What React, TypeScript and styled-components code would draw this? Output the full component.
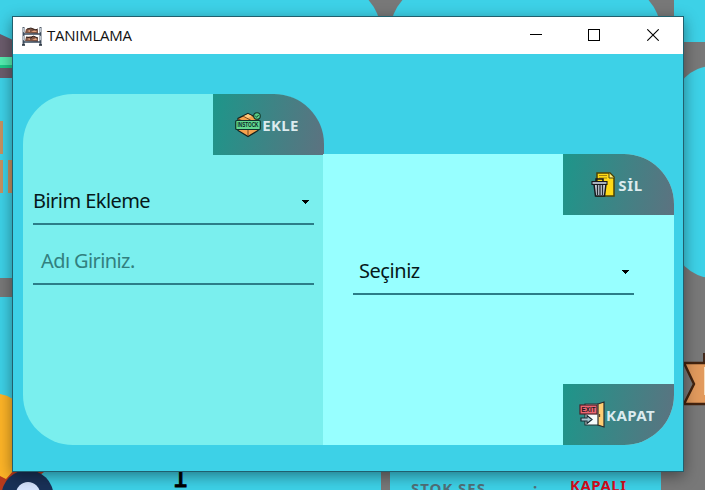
import React from "react";
import styled, { createGlobalStyle } from "styled-components";

const GlobalStyle = createGlobalStyle`
  * { box-sizing: border-box; }
  body { margin: 0; overflow: hidden; }
`;

const Desktop = styled.div`
  position: relative;
  width: 705px;
  height: 490px;
  padding: 16px 0 0 12px;
  overflow: hidden;
  background: #787878;
  font-family: "Noto Sans", sans-serif;
`;

const BackCard = styled.div<{ $x: number; $y: number; $w: number; $h: number; $r?: string }>`
  position: absolute;
  left: ${(p) => p.$x}px;
  top: ${(p) => p.$y}px;
  width: ${(p) => p.$w}px;
  height: ${(p) => p.$h}px;
  border-radius: ${(p) => p.$r ?? "0"};
  background: #3dd1e7;
`;

const BackArt = styled.svg`
  position: absolute;
  left: 0;
  top: 0;
`;

const BackLabel = styled.span<{ $x: number; $y: number; $color: string; $size: number; $spacing?: number }>`
  position: absolute;
  left: ${(p) => p.$x}px;
  top: ${(p) => p.$y}px;
  font-size: ${(p) => p.$size}px;
  line-height: 20px;
  font-weight: 700;
  letter-spacing: ${(p) => p.$spacing ?? 0}px;
  color: ${(p) => p.$color};
  white-space: pre;
`;

const BackNumber = styled(BackLabel)`
  font-family: "DejaVu Sans", sans-serif;
  font-weight: 400;
  -webkit-text-stroke: 0.9px #000;
`;

const Window = styled.main`
  position: relative;
  display: flex;
  flex-direction: column;
  width: 672px;
  height: 456px;
  border: 1px solid #20606e;
  background: #3dd1e7;
  box-shadow: 0 4px 14px rgba(0, 0, 0, 0.42);
`;

const TitleBar = styled.header`
  display: flex;
  align-items: center;
  flex: 0 0 37px;
  padding: 0 1px 0 9px;
  background: #fff;
`;

const Title = styled.h1`
  flex: 1;
  margin: -2px 0 0 5px;
  font: 400 15px/20px "Open Sans", sans-serif;
  letter-spacing: -0.25px;
  color: #111;
`;

const WindowButton = styled.button`
  display: grid;
  place-items: center;
  width: 58.5px;
  height: 37px;
  padding: 0 0 2px;
  border: 0;
  background: none;
`;

const Body = styled.div`
  display: grid;
  grid-template-columns: 300px 351px;
  grid-template-rows: 351px;
  padding: 40px 0 0 10px;
`;

const AddPanel = styled.section`
  display: flex;
  flex-direction: column;
  border-radius: 50px 50px 0 50px;
  background: #7aefee;
`;

const RemovePanel = styled.section`
  display: flex;
  flex-direction: column;
  height: 291px;
  margin-top: 60px;
  border-radius: 0 50px 50px 0;
  background: #97ffff;
`;

const ActionButton = styled.button<{ $corner: "top" | "bottom"; $shift?: number }>`
  display: flex;
  align-items: center;
  justify-content: center;
  align-self: flex-end;
  flex: 0 0 61px;
  width: 111px;
  margin-right: ${(p) => p.$shift ?? 0}px;
  margin-top: ${(p) => (p.$corner === "bottom" ? "auto" : "0")};
  padding: 0 3px 0 0;
  border: 0;
  border-radius: ${(p) => (p.$corner === "top" ? "0 50px 0 0" : "0 0 50px 0")};
  background: linear-gradient(100deg, #1d968a 0%, #5d7280 100%);
  color: #dcebee;
  font: 700 15px/20px "Noto Sans", sans-serif;
`;

const ButtonText = styled.span<{ $spacing: number }>`
  margin-left: 1px;
  letter-spacing: ${(p) => p.$spacing}px;
`;

const Field = styled.div<{ $top: number; $left: number; $indent: number }>`
  display: flex;
  align-items: center;
  justify-content: space-between;
  width: 281px;
  height: 46px;
  margin: ${(p) => p.$top}px 0 0 ${(p) => p.$left}px;
  padding: 0 4px 0 ${(p) => p.$indent}px;
  border-bottom: 2px solid #2c7d88;
`;

const FieldText = styled.span<{ $muted?: boolean; $spacing: number }>`
  font-size: 20px;
  line-height: 28px;
  letter-spacing: ${(p) => p.$spacing}px;
  color: ${(p) => (p.$muted ? "#32807f" : "#06181a")};
`;

const Arrow = () => (
  <svg width="9" height="6" viewBox="0 0 9 6" shapeRendering="crispEdges">
    <path d="M1 2h7v1h-1v1h-1v1h-1v1h-1v-1h-1v-1h-1v-1h-1z" fill="#000" />
  </svg>
);

const ShelfIcon = () => (
  <svg width="20" height="20" viewBox="0 0 20 20">
    <path d="M3 7l1-4 6-1 6 2v4zM3 15l1-4 7-1 5 2v4z" fill="#7d5443" />
    <path d="M5 5l3-1v2zM9 6l4-2 2 2zM5 13l3-1v2zM10 14l4-2 1 2z" fill="#e3a27d" />
    <path d="M5 3l4-1 4 2 3-1M4 11l5 1 2-2 5 2" stroke="#33231f" fill="none" />
    <path d="M1.500 1v18M18.500 1v18" stroke="#56616e" strokeWidth="2" />
    <path d="M1 8h18M1 16h18" stroke="#39485b" strokeWidth="1.600" />
    <path d="M1.500 2v4M1.500 10v4M18.500 2v4M18.500 10v4" stroke="#bdc6ce" />
    <path d="M0 19h3M17 19h3" stroke="#202c39" strokeWidth="1.500" />
  </svg>
);

const StockIcon = () => (
  <svg width="26" height="26" viewBox="0 0 26 26">
    <path d="M13 1.500l10 5v12l-10 6-10-6v-12z" fill="#f5a24d" stroke="#13231f" strokeWidth="1.300" />
    <path d="M3 7l10 4 10-4M13 11v13M8 4l9 5" fill="none" stroke="#754822" />
    <path d="M9 4l4-2 4 2-4 2z" fill="#ffca7e" />
    <rect x=".7" y="8.500" width="24.600" height="9" rx="1" fill="#63d990" stroke="#10332c" strokeWidth="1.200" />
    <text x="13" y="15.300" textAnchor="middle" textLength="21" lengthAdjust="spacingAndGlyphs" fontFamily="Liberation Sans" fontWeight="700" fontSize="6.500" fill="#07251f">INSTOCK</text>
    <circle cx="22" cy="4" r="3.300" fill="#59cf88" stroke="#12392d" strokeWidth="1.100" />
    <path d="M20.300 4l1.300 1.200 2-2.200" fill="none" stroke="#12392d" />
  </svg>
);

const TrashIcon = () => (
  <svg width="26" height="26" viewBox="0 0 26 26">
    <path d="M6 1h13l4 4v19H6z" fill="#ffda16" stroke="#4b4306" strokeWidth="1.500" />
    <path d="M18 1v5h5" fill="#fff083" stroke="#4b4306" />
    <path d="M8 3.500h8M8 6h8" stroke="#a18510" />
    <path d="M3 12h12l-1.500 12h-9z" fill="#c8ced8" stroke="#17191d" strokeWidth="1.500" />
    <path d="M6.500 13v10M9 13v10M11.500 13v10" stroke="#252b31" strokeWidth="1.300" />
    <path d="M1 9.500h15v3H1z" fill="#a9b1bd" stroke="#17191d" strokeWidth="1.100" />
    <path d="M5 9V7h7v2" fill="none" stroke="#17191d" strokeWidth="1.500" />
  </svg>
);

const ExitIcon = () => (
  <svg width="26" height="27" viewBox="0 0 26 27">
    <path d="M6 3h14v21H6z" fill="#f6fbfb" stroke="#233538" strokeWidth="1.200" />
    <path d="M19 3l6-2v25l-6-2z" fill="#ffce73" stroke="#292d2d" strokeWidth="1.200" />
    <path d="M20.500 13v3" stroke="#594226" strokeWidth="1.300" />
    <rect x="1" y="4" width="17" height="9" fill="#ed6673" stroke="#4a2029" strokeWidth="1.200" />
    <text x="9.500" y="11" textAnchor="middle" textLength="14" lengthAdjust="spacingAndGlyphs" fontFamily="Liberation Sans" fontWeight="700" fontSize="7.500" fill="#20191d">EXIT</text>
    <path d="M2 17h6v-2.500l5 4-5 4V20H2z" fill="#a9c8d2" stroke="#192c34" strokeWidth="1.200" />
  </svg>
);

const Background = () => (
  <>
    <BackCard $x={-60} $y={-17} $w={441} $h={295} $r="0 50px 0 0" />
    <BackCard $x={390} $y={-17} $w={271} $h={280} $r="50px 50px 0 0" />
    <BackCard $x={674} $y={0} $w={31} $h={42} />
    <BackCard $x={673} $y={66} $w={90} $h={212} $r="40px" />
    <BackCard $x={0} $y={297} $w={381} $h={193} />
    <BackCard $x={390} $y={297} $w={271} $h={193} />
    <BackArt width="705" height="490" viewBox="0 0 705 490">
      <path d="M0 34l13 6v38H0z" fill="#6b5c6c" />
      <path d="M0 57h13v11H0z" fill="#55edb0" />
      <path d="M0 65h13v3H0z" fill="#1cca88" />
      <path d="M0 121h3v33H0zM0 160h3v33H0zM8 160h5v33H8z" fill="#c69161" />
      <path d="M0 394q7 1 13 5v91H0z" fill="#fdb427" />
      <path d="M0 476l6 3 8-9h30v2L20 490H0z" fill="#b93b1c" />
      <circle cx="27.500" cy="496" r="26" fill="#193158" />
      <circle cx="28" cy="494" r="12" fill="#d6e4ff" />
      <path d="M703 353h3v10h-3z" fill="#43291c" />
      <path d="M684 363h23v41h-23l10-20z" fill="#e29a5d" stroke="#43230f" strokeWidth="2.500" strokeLinejoin="round" />
      <path d="M704 367h1v28h-1z" fill="#f7dfbf" />
    </BackArt>
    <BackNumber $x={172} $y={468} $color="#000" $size={26}>1</BackNumber>
    <BackLabel $x={411} $y={478} $color="#527078" $size={15} $spacing={0.95}>STOK SES</BackLabel>
    <BackLabel $x={533} $y={478} $color="#527078" $size={15}>:</BackLabel>
    <BackLabel $x={570} $y={475} $color="#d40d1c" $size={15} $spacing={0.5}>KAPALI</BackLabel>
  </>
);

export default function App() {
  return (
    <Desktop>
      <GlobalStyle />
      <Background />
      <Window>
        <TitleBar>
          <ShelfIcon />
          <Title>TANIMLAMA</Title>
          <WindowButton aria-label="Simge durumuna küçült">
            <svg width="12" height="12" shapeRendering="crispEdges"><path d="M0 5.500h12" stroke="#000" /></svg>
          </WindowButton>
          <WindowButton aria-label="Ekranı kapla">
            <svg width="12" height="12" shapeRendering="crispEdges"><path d="M.5.5h11v11H.5z" fill="none" stroke="#000" /></svg>
          </WindowButton>
          <WindowButton aria-label="Kapat">
            <svg width="12" height="12"><path d="M.3.3l11.400 11.400M11.700.3L.3 11.700" stroke="#000" strokeWidth="1.100" /></svg>
          </WindowButton>
        </TitleBar>
        <Body>
          <AddPanel>
            <ActionButton $corner="top" $shift={-1}>
              <StockIcon />
              <ButtonText $spacing={0.4}>EKLE</ButtonText>
            </ActionButton>
            <Field $top={24} $left={10} $indent={0}>
              <FieldText $spacing={-0.55}>Birim Ekleme</FieldText>
              <Arrow />
            </Field>
            <Field $top={14} $left={10} $indent={8}>
              <FieldText $muted $spacing={-0.6}>Adı Giriniz.</FieldText>
            </Field>
          </AddPanel>
          <RemovePanel>
            <ActionButton $corner="top">
              <TrashIcon />
              <ButtonText $spacing={0.6}>SİL</ButtonText>
            </ActionButton>
            <Field $top={34} $left={30} $indent={6}>
              <FieldText $spacing={-0.45}>Seçiniz</FieldText>
              <Arrow />
            </Field>
            <ActionButton $corner="bottom">
              <ExitIcon />
              <ButtonText $spacing={0.4}>KAPAT</ButtonText>
            </ActionButton>
          </RemovePanel>
        </Body>
      </Window>
    </Desktop>
  );
}
